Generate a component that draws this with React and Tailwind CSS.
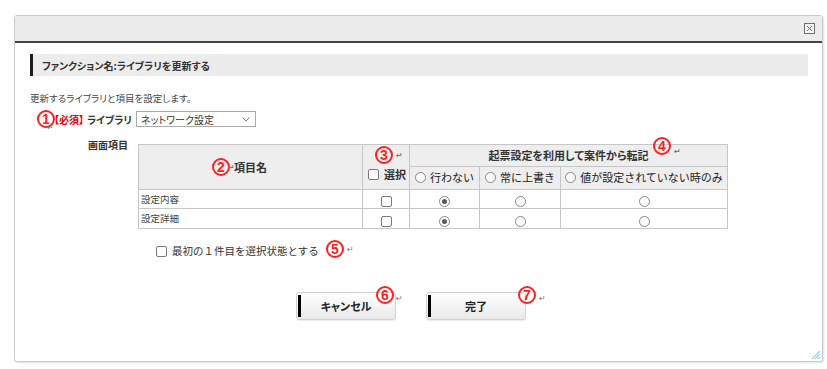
import React from "react";

const Num = ({ n, className }) => (
  <span
    className={`absolute flex items-center justify-center w-[18px] h-[18px] rounded-full border-2 border-[#ff1f1f] text-[#ff1f1f] text-[14px] font-bold leading-none font-['Liberation_Sans',sans-serif] ${className}`}
  >
    {n}
  </span>
);

const Ret = ({ className }) => (
  <span className={`absolute text-[8px] leading-none text-[#777] font-['DejaVu_Sans',sans-serif] ${className}`}>↵</span>
);

const Check = () => (
  <span className="inline-block w-[11px] h-[11px] border border-[#7a7a7a] rounded-[2px] bg-white align-middle" />
);

const Radio = ({ on }) => (
  <span className="inline-flex items-center justify-center w-[11px] h-[11px] border border-[#858585] rounded-full bg-white align-middle">
    {on && <span className="w-[5px] h-[5px] rounded-full bg-[#5a5a5a]" />}
  </span>
);

const rows = [
  { name: "設定内容" },
  { name: "設定詳細" },
];

const App = () => {
  return (
    <div className="w-[827px] h-[369px] bg-white font-['Noto_Sans_CJK_JP',sans-serif] text-[#333] overflow-hidden">
      <div className="ml-[14px] pt-[15px]">
        <div className="relative w-[809px] h-[347px] border border-[#cbcbcb] rounded-[3px] bg-white flex flex-col shadow-[1px_1px_2px_rgba(0,0,0,0.12)]">
          {/* title bar */}
          <div className="h-[27px] bg-[#ececec] border-b-2 border-[#444] flex items-center justify-end pr-[7px]">
            <svg width="11" height="11" viewBox="0 0 11 11">
              <rect x="0.5" y="0.5" width="10" height="10" fill="#f4f4f4" stroke="#6e6e6e" />
              <path d="M3 3 L8 8 M8 3 L3 8" stroke="#6e6e6e" strokeWidth="1" />
            </svg>
          </div>

          <div className="pl-[15px] pr-[14px] flex flex-col [font-feature-settings:'palt']">
            {/* section header */}
            <div className="mt-[11px] h-[22px] border-l-[3px] border-[#1c1c1c] bg-[#ececec] flex items-center pl-[9px] text-[10px] font-bold text-[#333]">
              ファンクション名:ライブラリを更新する
            </div>

            <div className="mt-[16px] text-[9.5px] leading-[12px] text-[#444]">
              更新するライブラリと項目を設定します。
            </div>

            {/* library row */}
            <div className="relative mt-[7px] h-[16px] flex items-center pl-[24px] text-[10px]">
              <Num n="1" className="left-[7px] top-[-1px]" />
              <Ret className="left-[17px] top-[13px]" />
              <span className="text-[#e60000] font-bold">【必須】</span>
              <span className="ml-[3px] font-bold text-[#333]">ライブラリ</span>
              <div className="ml-[4px] w-[120px] h-[16px] border border-[#a9a9a9] bg-white flex items-center justify-between pl-[4px] pr-[5px] text-[10px] text-[#333]">
                <span>ネットワーク設定</span>
                <svg width="8" height="5" viewBox="0 0 8 5">
                  <path d="M0.5 0.5 L4 4 L7.5 0.5" fill="none" stroke="#777" strokeWidth="1" />
                </svg>
              </div>
            </div>

            {/* items table */}
            <div className="mt-[12px] flex pl-[58px]">
              <div className="w-[50px] text-[10px] leading-[12px] font-bold text-[#333]">画面項目</div>
              <table className="mt-[5px] border-collapse text-[#333] table-fixed w-[589px]">
                <colgroup>
                  <col className="w-[224px]" />
                  <col className="w-[47px]" />
                  <col className="w-[70px]" />
                  <col className="w-[81px]" />
                  <col className="w-[167px]" />
                </colgroup>
                <thead>
                  <tr className="h-[22px] bg-[#eeeeee]">
                    <th rowSpan={2} className="relative border border-[#c6c6c6] text-[11px] font-bold">
                      <Num n="2" className="left-[73px] top-[13px]" />
                      <Ret className="left-[89px] top-[19px]" />
                      項目名
                    </th>
                    <th rowSpan={2} className="relative border border-[#c6c6c6] text-[11px] font-bold">
                      <Num n="3" className="left-[12px] top-[1px]" />
                      <Ret className="left-[33px] top-[7px]" />
                      <div className="mt-[14px] flex items-center pl-[5px] gap-[5px]">
                        <Check />
                        <span>選択</span>
                      </div>
                    </th>
                    <th colSpan={3} className="relative border border-[#c6c6c6] text-[11px] font-bold">
                      <Num n="4" className="left-[243px] top-[-8px]" />
                      <Ret className="left-[264px] top-[3px]" />
                      起票設定を利用して案件から転記
                    </th>
                  </tr>
                  <tr className="h-[23px] bg-[#eeeeee] [font-feature-settings:normal]">
                    <th className="border border-[#c6c6c6] text-[11px] font-normal text-[#222]">
                      <span className="inline-flex items-center gap-[4px]">
                        <Radio />
                        行わない
                      </span>
                    </th>
                    <th className="border border-[#c6c6c6] text-[11px] font-normal text-[#222]">
                      <span className="inline-flex items-center gap-[4px]">
                        <Radio />
                        常に上書き
                      </span>
                    </th>
                    <th className="border border-[#c6c6c6] text-[11px] font-normal text-[#222]">
                      <span className="inline-flex items-center gap-[4px]">
                        <Radio />
                        値が設定されていない時のみ
                      </span>
                    </th>
                  </tr>
                </thead>
                <tbody>
                  {rows.map((r, i) => (
                    <tr key={r.name} className={i === 0 ? "h-[19px]" : "h-[20px]"}>
                      <td className="border border-[#c6c6c6] pl-[2px] text-[9.5px] text-[#444]">{r.name}</td>
                      <td className="border border-[#c6c6c6] text-center leading-none">
                        <Check />
                      </td>
                      <td className="border border-[#c6c6c6] text-center leading-none">
                        <Radio on />
                      </td>
                      <td className="border border-[#c6c6c6] text-center leading-none">
                        <Radio />
                      </td>
                      <td className="border border-[#c6c6c6] text-center leading-none">
                        <Radio />
                      </td>
                    </tr>
                  ))}
                </tbody>
              </table>
            </div>

            {/* first row select option */}
            <div className="mt-[16px] h-[12px] flex items-center pl-[126px] [font-feature-settings:normal]">
              <div className="relative flex items-center gap-[5px] text-[10.5px] text-[#333]">
                <Check />
                <span>最初の１件目を選択状態とする</span>
                <Num n="5" className="left-[170px] top-[-3px]" />
                <Ret className="left-[191px] top-[3px]" />
              </div>
            </div>

            {/* buttons */}
            <div className="mt-[35px] flex pl-[266px] gap-[30px]">
              <button className="relative w-[100px] h-[28px] border border-[#d2d2d2] rounded-[3px] bg-linear-to-b from-white to-[#e9e9e9] shadow-[0_1px_1px_rgba(0,0,0,0.08)] flex items-center">
                <span className="ml-[1px] w-[3px] h-[22px] bg-black" />
                <span className="flex-1 text-center text-[11px] font-bold text-[#222] pr-[4px]">キャンセル</span>
                <Num n="6" className="left-[79px] top-[-7px]" />
                <Ret className="left-[99px] top-[2px]" />
              </button>
              <button className="relative w-[100px] h-[28px] border border-[#d2d2d2] rounded-[3px] bg-linear-to-b from-white to-[#e9e9e9] shadow-[0_1px_1px_rgba(0,0,0,0.08)] flex items-center">
                <span className="ml-[1px] w-[3px] h-[22px] bg-black" />
                <span className="flex-1 text-center text-[11px] font-bold text-[#222] pr-[4px]">完了</span>
                <Num n="7" className="left-[91px] top-[-7px]" />
                <Ret className="left-[112px] top-[2px]" />
              </button>
            </div>
          </div>

          {/* resize grip */}
          <svg className="absolute right-[2px] bottom-[2px]" width="8" height="8" viewBox="0 0 8 8">
            <path d="M8 0 L0 8 M8 3 L3 8 M8 6 L6 8" stroke="#8fcdea" strokeWidth="1.2" />
          </svg>
        </div>
      </div>
    </div>
  );
};

export default App;
